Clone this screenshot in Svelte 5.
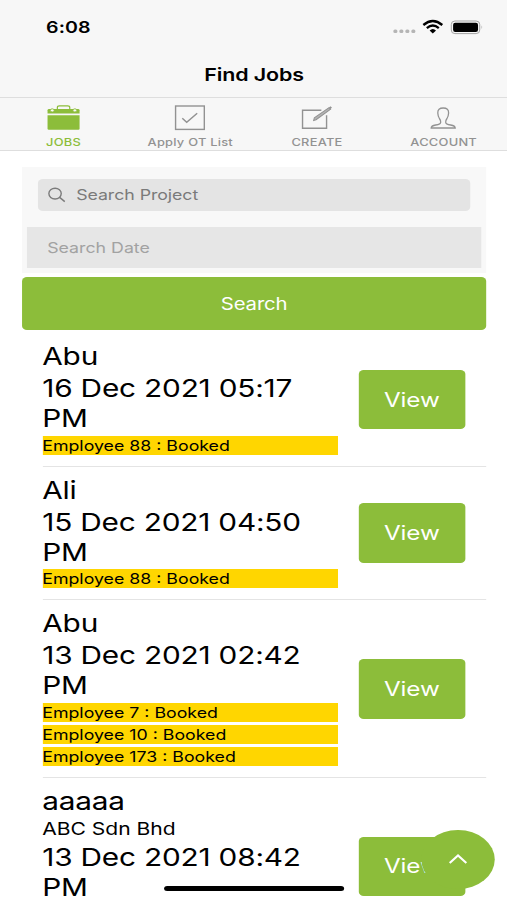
<script lang="ts">
	type Job = {
		name: string;
		company?: string;
		date: string;
		bookings: string[];
	};

	const tabs = [
		{ id: 'jobs', label: 'JOBS' },
		{ id: 'ot', label: 'Apply OT List' },
		{ id: 'create', label: 'CREATE' },
		{ id: 'account', label: 'ACCOUNT' },
	];

	const jobs: Job[] = [
		{ name: 'Abu', date: '16 Dec 2021 05:17 PM', bookings: ['Employee 88 : Booked'] },
		{ name: 'Ali', date: '15 Dec 2021 04:50 PM', bookings: ['Employee 88 : Booked'] },
		{
			name: 'Abu',
			date: '13 Dec 2021 02:42 PM',
			bookings: ['Employee 7 : Booked', 'Employee 10 : Booked', 'Employee 173 : Booked'],
		},
		{ name: 'aaaaa', company: 'ABC Sdn Bhd', date: '13 Dec 2021 08:42 PM', bookings: [] },
	];

	let selected = $state('jobs');
	let project = $state('');
	let date = $state('');
</script>

<div class="viewport">
	<div class="phone">
		<header>
			<div class="status">
				<span class="time">6:08</span>
				<svg class="signals" viewBox="0 0 92 18" preserveAspectRatio="none">
					<g fill="#b5b5b5">
						<rect x="1.5" y="11.5" width="4" height="3.4" rx="1.5" />
						<rect x="7.5" y="11.5" width="4" height="3.4" rx="1.5" />
						<rect x="13.5" y="11.5" width="4" height="3.4" rx="1.5" />
						<rect x="19.5" y="11.5" width="4" height="3.4" rx="1.5" />
					</g>
					<g fill="none" stroke="#000" stroke-width="2.3">
						<path d="M31.5 7Q41 -1 50.5 7" />
						<path d="M35 10.1Q41 4.9 47 10.1" />
					</g>
					<path d="M37.8 12.5Q41 9.5 44.2 12.5L41 15.5Z" />
					<rect x="59.5" y="3" width="28.5" height="12.6" rx="3.6" fill="none" stroke="#a2a2a2" />
					<rect x="61.3" y="4.7" width="25" height="9.2" rx="2.2" />
					<path d="M89.8 7.2Q91.4 9.3 89.8 11.5Z" fill="#a2a2a2" />
				</svg>
			</div>
			<h1>Find Jobs</h1>
		</header>

		<nav>
			{#each tabs as tab (tab.id)}
				<button class="tab" class:active={selected === tab.id} onclick={() => (selected = tab.id)}>
					<svg viewBox="0 0 34 28" preserveAspectRatio="none">
						{#if tab.id === 'jobs'}
							<path
								d="M10.8 5.5V3.6Q10.8 1.8 12.8 1.8H21.2Q23.2 1.8 23.2 3.6V5.5"
								stroke-width="1.2"
							/>
							<path class="solid" d="M1 9.6V6.2Q1 5 2.6 5H31.4Q33 5 33 6.2V9.6Z" />
							<path class="solid" d="M1 11.2H33V24.6Q33 25.8 31.8 25.8H2.2Q1 25.8 1 24.6Z" />
							<ellipse class="latch" cx="5.7" cy="6.4" rx="1.9" ry="1.6" />
							<ellipse class="latch" cx="28.3" cy="6.4" rx="1.9" ry="1.6" />
						{:else if tab.id === 'ot'}
							<rect x="2.9" y="2" width="28.7" height="23.4" />
							<path d="M9.6 14.2L14 18.2L24.5 9.2" stroke-width="1.5" />
						{:else if tab.id === 'create'}
							<path d="M21.3 6.2H2.5V24.3H26.5V11.2" />
							<path d="M13.6 16.4L14.3 13.9L29 3.6L30.5 5.2L16 15.7Z" fill="#b4b4b4" stroke-width="1" />
							<path d="M29.6 2.9L31.2 4.3" stroke-width="2" />
						{:else}
							<path
								d="M5 24Q5 21.8 9.5 21Q14.5 20.2 14.5 18.2Q14.7 16.5 13.2 14.5Q11.8 12.5 11.6 9Q11.4 4 17 4Q22.6 4 22.4 9Q22.2 12.5 20.8 14.5Q19.3 16.5 19.5 18.2Q19.5 20.2 24.5 21Q29 21.8 29 24Z"
								stroke-width="1.3"
							/>
						{/if}
					</svg>
					<span class="label">{tab.label}</span>
				</button>
			{/each}
		</nav>

		<main>
			<div class="filters">
				<label class="search">
					<svg viewBox="0 0 18 16" preserveAspectRatio="none">
						<ellipse cx="7.3" cy="6.6" rx="6.2" ry="5.4" />
						<path d="M11.9 10.4L17 14.6" />
					</svg>
					<input placeholder="Search Project" bind:value={project} />
				</label>
				<input class="date" placeholder="Search Date" bind:value={date} />
			</div>
			<button class="submit">Search</button>

			<ul>
				{#each jobs as job}
					<li class:with-company={job.company}>
						<div class="info">
							<h2>{job.name}</h2>
							{#if job.company}
								<p class="company">{job.company}</p>
							{/if}
							<p class="when">{job.date}</p>
							{#each job.bookings as booking}
								<p class="booking">{booking}</p>
							{/each}
						</div>
						<button class="view">View</button>
					</li>
				{/each}
			</ul>
		</main>

		<button class="fab" aria-label="Back to top">
			<svg viewBox="0 0 20 12" preserveAspectRatio="none">
				<path d="M1.5 10L10 2.5L18.5 10" />
			</svg>
		</button>
		<div class="home-bar"></div>
	</div>
</div>

<style>
	:global(body) {
		background: #fff;
	}
	.viewport {
		width: 507px;
		height: 900px;
		overflow: hidden;
	}
	/* 414pt wide layout, widened to fill the viewport */
	.phone {
		position: relative;
		width: 414px;
		height: 900px;
		overflow: hidden;
		transform: scaleX(1.22464);
		transform-origin: 0 0;
		background: #fff;
		color: #000;
		font-family: Inter, 'Liberation Sans', sans-serif;
	}
	h1,
	h2,
	p,
	ul {
		margin: 0;
		padding: 0;
		font-weight: 400;
	}
	button,
	input {
		margin: 0;
		padding: 0;
		border: 0;
		font: inherit;
		outline: none;
	}
	header {
		height: 97px;
		background: #f7f7f7;
	}
	.status {
		display: flex;
		justify-content: space-between;
		height: 54px;
		padding: 0 19px 0 37.6px;
		align-items: center;
	}
	.time {
		font-size: 16px;
		font-weight: 600;
		letter-spacing: 0.1px;
	}
	.signals {
		width: 75px;
		height: 18px;
	}
	h1 {
		padding-left: 1px;
		font-size: 17.5px;
		line-height: 41px;
		font-weight: 600;
		letter-spacing: -0.1px;
		text-align: center;
	}
	nav {
		display: flex;
		box-sizing: border-box;
		height: 54px;
		padding-left: 0.2px;
		border-top: 1px solid #dedede;
		border-bottom: 1px solid #dedede;
		background: #f7f7f7;
	}
	.tab {
		flex: 1;
		display: flex;
		flex-direction: column;
		align-items: center;
		padding-top: 6px;
		background: none;
		color: #929292;
	}
	.tab.active {
		color: #8cbd3a;
	}
	.tab svg {
		width: 27.8px;
		height: 28px;
		fill: none;
		stroke: currentColor;
		stroke-width: 1.4;
	}
	.tab .solid {
		fill: currentColor;
		stroke: none;
	}
	.tab .latch {
		fill: #f7f7f7;
		stroke-width: 0.9;
	}
	.label {
		margin-top: 4px;
		font-size: 10.5px;
		line-height: 14px;
		font-weight: 500;
		letter-spacing: 0.2px;
		white-space: nowrap;
	}
	main {
		padding: 16px 17px 0 18px;
	}
	.filters {
		box-sizing: border-box;
		height: 106px;
		margin-bottom: 4px;
		padding: 12px 4px 0 3.5px;
		background: #f8f8f8;
	}
	.search {
		display: flex;
		align-items: center;
		height: 31.5px;
		margin: 0 9px;
		padding-left: 8.5px;
		border-radius: 4px;
		background: #e4e4e4;
	}
	.search svg {
		width: 14.7px;
		height: 16px;
		margin-right: 8.5px;
		fill: none;
		stroke: #7b7b7b;
		stroke-width: 1.4;
	}
	.search input {
		flex: 1;
		min-width: 0;
		background: none;
		font-size: 14.5px;
		letter-spacing: -0.05px;
	}
	.search input::placeholder {
		color: #7a7a7a;
	}
	.date {
		display: block;
		box-sizing: border-box;
		width: 100%;
		height: 41.5px;
		margin-top: 16px;
		padding-left: 17px;
		background: #e6e6e6;
		font-size: 14.5px;
		letter-spacing: 0;
	}
	.date::placeholder {
		color: #a2a2a2;
	}
	.submit,
	.view {
		border-radius: 4px;
		background: #8cbd3a;
		color: #fff;
	}
	.submit {
		display: block;
		width: 100%;
		height: 53px;
		font-size: 16.6px;
		letter-spacing: -0.1px;
	}
	ul {
		padding: 3.3px 0 0 16.5px;
		list-style: none;
	}
	li {
		display: flex;
		justify-content: space-between;
		box-sizing: border-box;
		padding: 8px 17px 11px 0;
		border-bottom: 1px solid #e4e4e4;
	}
	li.with-company {
		height: 177px;
	}
	.info {
		width: 241px;
	}
	h2,
	.when {
		font-size: 24.3px;
		line-height: 30px;
		letter-spacing: -0.15px;
	}
	.when {
		width: 225px;
		margin: 2px 0 2.5px;
	}
	.company {
		margin-top: 2px;
		font-size: 17.2px;
		line-height: 21.5px;
	}
	.booking {
		height: 19px;
		font-size: 14.5px;
		line-height: 20px;
		background: #ffd600;
		white-space: nowrap;
	}
	.booking + .booking {
		margin-top: 3.3px;
	}
	.view {
		align-self: center;
		width: 87.5px;
		height: 59.5px;
		margin: -8px 0 -11px;
		font-size: 19.8px;
		letter-spacing: -0.1px;
	}
	.fab {
		position: absolute;
		right: 10.5px;
		bottom: 11px;
		width: 60px;
		height: 59.5px;
		border-radius: 50%;
		background: #8cbd3a;
	}
	.fab svg {
		width: 16px;
		height: 12px;
		fill: none;
		stroke: #fff;
		stroke-width: 2.2;
	}
	.home-bar {
		position: absolute;
		left: 134px;
		bottom: 9px;
		width: 147px;
		height: 5px;
		border-radius: 3px;
		background: #000;
	}
</style>
